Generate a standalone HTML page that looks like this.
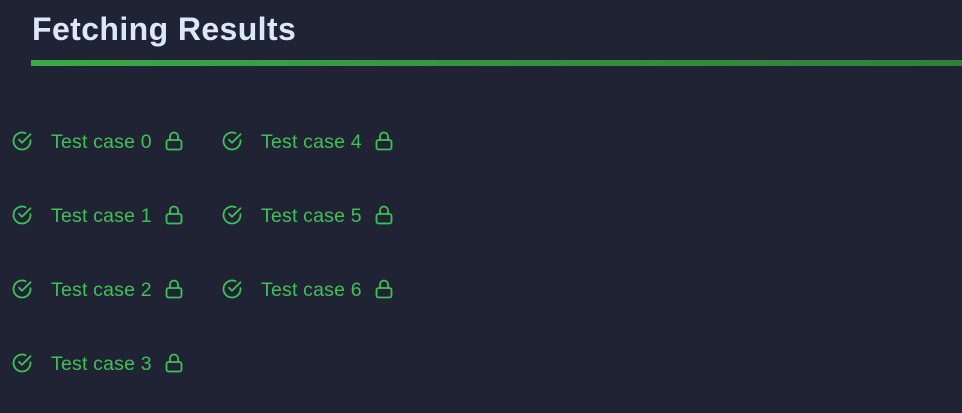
<!DOCTYPE html>
<html><head><style>
body{margin:0;width:962px;height:413px;background:#1f2334;overflow:hidden;font-family:"Liberation Sans",sans-serif;position:relative}
h1{position:absolute;left:32px;top:10px;margin:0;font-size:32px;line-height:38px;font-weight:bold;color:#dbe8fb;letter-spacing:0.4px}
.bar{position:absolute;left:31px;top:60px;width:931px;height:6px;background:linear-gradient(90deg,#3aa946,#2f7f3b)}
.it{position:absolute;height:20px;color:#3ec155;font-size:19.5px;line-height:20px}
.it svg{position:absolute;top:0}
.it span{position:absolute;white-space:nowrap;top:1px;letter-spacing:0.2px}
</style></head><body>
<h1>Fetching Results</h1>
<div class="bar"></div>
<div id="c"></div>
<script>
var pos=[[0,0,131],[1,0,205],[2,0,279],[3,0,353],[4,210,131],[5,210,205],[6,210,279]];
var h='';
pos.forEach(function(p){
h+='<div class="it" style="left:'+p[1]+'px;top:'+p[2]+'px">'+
'<svg style="left:11px;top:-1px" width="22" height="22" viewBox="0 0 22 22" fill="none" stroke="#3ec155" stroke-width="1.8" stroke-linecap="round" stroke-linejoin="round"><path d="M19.5 10.2V11a8.5 8.5 0 1 1-5-7.75"/><path d="M19.5 4.2 11 12.7l-3-3"/></svg>'+
'<span style="left:51px">Test case '+p[0]+'</span>'+
'<svg style="left:164px;top:-1px" width="20" height="22" viewBox="0 0 20 22" fill="none" stroke="#3ec155" stroke-width="1.8" stroke-linecap="round" stroke-linejoin="round"><rect x="2.5" y="10" width="15" height="9.5" rx="2"/><path d="M6 10V6.5a4 4 0 0 1 8 0V10"/></svg></div>';
});
document.getElementById('c').innerHTML=h;
</script>
</body></html>
